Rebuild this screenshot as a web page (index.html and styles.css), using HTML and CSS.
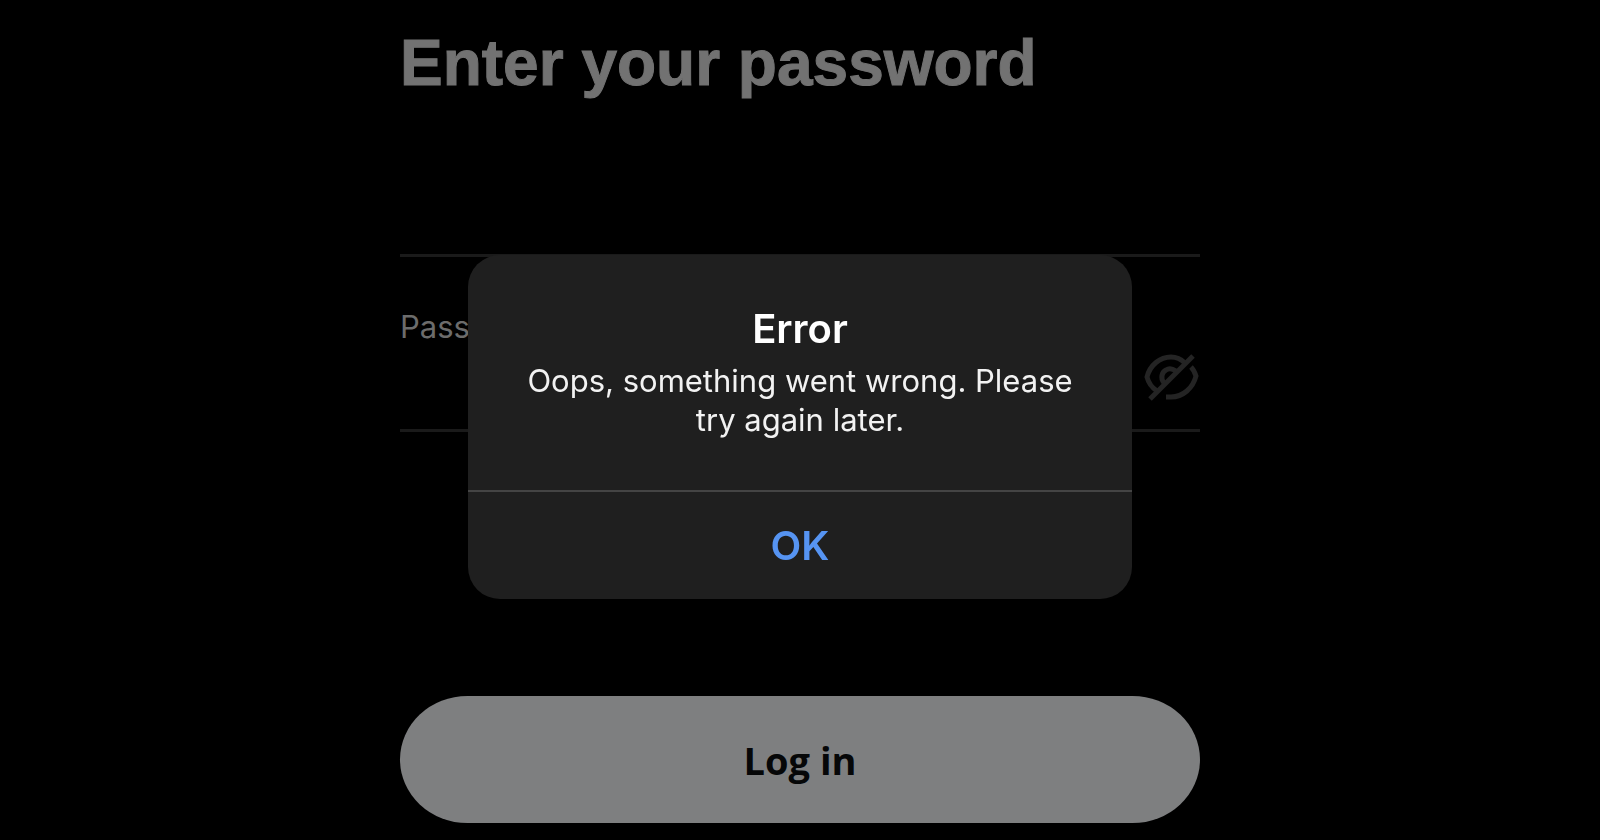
FILE: index.html
```html
<!DOCTYPE html>
<html lang="en">
<head>
    <meta charset="UTF-8">
    <meta name="viewport" content="width=device-width, initial-scale=1.0">
    <title>Enter your password</title>
    <link rel="stylesheet" href="styles.css">
</head>
<body>

<main class="container">
    <h1>Enter your password</h1>

    <!-- Login Form -->
    <form id="loginForm">
        <div class="field">
            <label for="password">Password</label>
            <div class="field-row">
                <input type="password" id="password">
                <button type="button" class="toggle-password" aria-label="Show password">
                    <svg viewBox="0 0 56 48" fill="none" stroke="currentColor" stroke-width="5">
                        <path d="M13 38C7 34 4 28 3 24C6 12 16 4 27 4C33 4 37 6 41 10"/>
                        <path d="M47 14C50 17 51 20 52 23C49 35 39 44 27 44H22"/>
                        <path d="M20 30C16 25 18 19 22 17C25 15 29 16 32 18"/>
                        <path d="M6 46L49 3"/>
                    </svg>
                </button>
            </div>
        </div>
        <button type="submit" class="login">Log in</button>
    </form>
</main>

<!-- Error alert -->
<div class="overlay">
    <div class="alert" role="alertdialog" aria-labelledby="alert-title" aria-describedby="alert-text">
        <div class="alert-body">
            <h2 id="alert-title">Error</h2>
            <p id="alert-text">Oops, something went wrong. Please try again later.</p>
        </div>
        <button type="button" class="alert-ok">OK</button>
    </div>
</div>

</body>
</html>
```

FILE: styles.css
```css
* {
    box-sizing: border-box;
}
body {
    font-family: Inter, "Liberation Sans", sans-serif;
    margin: 0;
    background-color: #000;
}
h1, h2, p {
    margin: 0;
}
button {
    border: none;
    cursor: pointer;
    font-family: inherit;
}
.container {
    width: 50%;
    margin: 0 auto;
    padding-top: 24px;
}
h1 {
    font-family: "Liberation Sans", Arial, sans-serif;
    font-size: 64px;
    line-height: 78px;
    font-weight: bold;
    color: #727272;
    -webkit-text-stroke: 1px #727272;
    white-space: nowrap;
}
.field {
    margin-top: 152px;
    padding-top: 50px;
    border-top: 3px solid #1a1a1a;
    border-bottom: 3px solid #1a1a1a;
}
.field label {
    display: block;
    font-size: 31px;
    line-height: 40px;
    color: #6c6c6c;
}
.field-row {
    display: flex;
    height: 82px;
}
.field input {
    flex: 1;
    min-width: 0;
    border: none;
    outline: none;
    background: transparent;
    color: #727272;
    font-size: 31px;
}
.toggle-password {
    display: flex;
    padding: 6px 0;
    background: transparent;
    color: #242424;
}
.toggle-password svg {
    width: 56px;
    height: 48px;
}
.login {
    width: 100%;
    height: 127px;
    margin-top: 264px;
    border-radius: 68px / 64px;
    background-color: #7e7f80;
    color: #060708;
    font-family: "Open Sans", sans-serif;
    font-size: 38px;
    font-weight: 700;
}
.overlay {
    position: fixed;
    inset: 0;
    display: flex;
    align-items: center;
    justify-content: center;
    padding-top: 14px;
}
.alert {
    width: 664px;
    border-radius: 32px;
    overflow: hidden;
    background-color: #1f1f1f;
    text-align: center;
}
.alert-body {
    padding: 48px 48px 51px;
}
.alert h2 {
    font-size: 40px;
    line-height: 52px;
    font-weight: 600;
    color: #fff;
}
.alert p {
    padding-top: 6px;
    font-size: 31px;
    line-height: 39px;
    color: #f2f2f2;
}
.alert-ok {
    width: 100%;
    height: 109px;
    border-top: 2px solid #444;
    background: transparent;
    color: #5694f2;
    font-size: 40px;
    font-weight: 600;
}
```
